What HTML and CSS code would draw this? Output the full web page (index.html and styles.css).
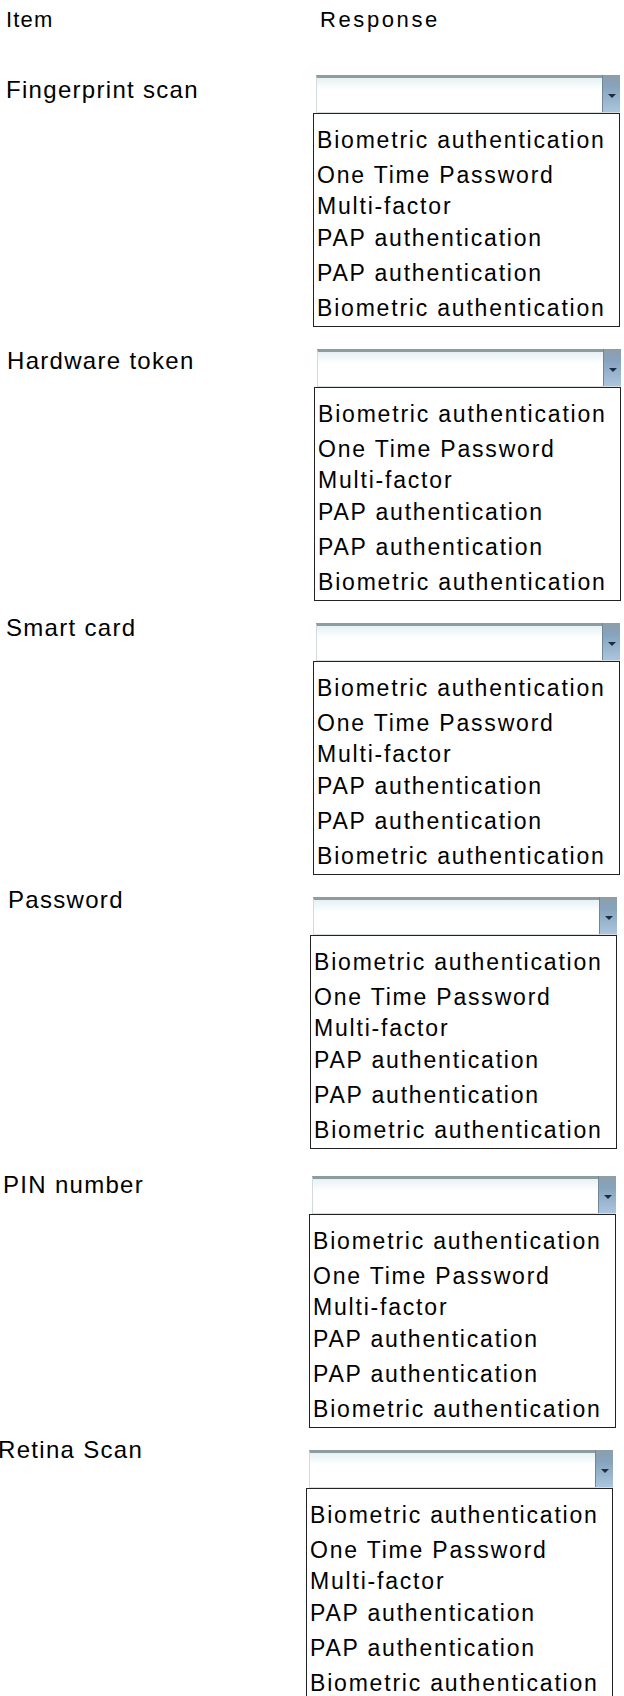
FILE: index.html
```html
<!DOCTYPE html>
<html>

<head>
    <meta charset="UTF-8">
    <meta name="viewport" content="width=device-width, initial-scale=1.0">
    <title>Authentication Methods</title>
    <link rel="stylesheet" href="styles.css">
</head>

<body>
    <div class="sheet">
        <div class="heading">
            <div class="heading-item">Item</div>
            <div class="heading-response">Response</div>
        </div>
        <div class="rows" id="rows"></div>
    </div>
    <script>
        // Items on the left and the answers listed under every dropdown
        const items = ["Fingerprint scan", "Hardware token", "Smart card", "Password", "PIN number", "Retina Scan"];
        const choices = [
            "Biometric authentication",
            "One Time Password",
            "Multi-factor",
            "PAP authentication",
            "PAP authentication",
            "Biometric authentication"
        ];

        const rows = document.getElementById("rows");

        // Build one row per item: label, closed select, open option list
        items.forEach((item) => {
            const row = document.createElement("div");
            row.className = "row";
            row.innerHTML = `
            <div class="row-label">${item}</div>
            <div class="response">
                <div class="select">
                    <span class="select-btn">
                        <svg width="8" height="4" viewBox="0 0 8 4"><path d="M0 0h8L4 4z" fill="#1b2d45"/></svg>
                    </span>
                </div>
                <ul class="options">
                    ${choices.map((choice) => `<li>${choice}</li>`).join("")}
                </ul>
            </div>
            `;
            rows.appendChild(row);
        });
    </script>
</body>

</html>
```

FILE: styles.css
```css
/* Reset styles */
* {
    margin: 0;
    padding: 0;
    box-sizing: border-box;
}

html,
body {
    overflow: hidden;
}

body {
    font-family: "Liberation Sans", Arial, sans-serif;
    color: #000;
    background-color: #fff;
}

/* Column titles */
.heading {
    display: flex;
    align-items: baseline;
    height: 32px;
    padding-top: 8px;
    line-height: 24px;
}

.heading-item {
    width: 320px;
    padding-left: 6px;
    font-size: 22px;
    letter-spacing: 1.2px;
}

.heading-response {
    font-size: 22px;
    letter-spacing: 2.6px;
}

/* Item rows */
.rows {
    padding-top: 43px;
}

.row {
    display: flex;
    align-items: flex-start;
    margin-bottom: 22px;
}

.row-label {
    flex: none;
    width: 313px;
    padding-left: 6px;
    margin-top: 2px;
    font-size: 24px;
    line-height: 26px;
    letter-spacing: 1.3px;
    white-space: nowrap;
}

.response {
    flex: none;
    width: 307px;
}

/* Closed dropdown */
.select {
    display: flex;
    justify-content: flex-end;
    height: 38px;
    margin-left: 3px;
    border-top: 3px solid #8d9c9e;
    border-left: 1px solid #d3dadb;
    border-bottom: 1px solid #d9dfe0;
    background: linear-gradient(#e6f1f4, #fff 35%);
}

.select-btn {
    display: flex;
    align-items: center;
    justify-content: center;
    width: 18px;
    margin-top: -3px;
    padding-top: 4px;
    border-left: 1px solid #6f8797;
    background: linear-gradient(#8e9ea8, #86a3bd 30%, #aac5dd);
}

/* Open option list */
.options {
    list-style: none;
    height: 214px;
    padding: 10px 0 0 3px;
    border: 1px solid #222;
    background-color: #fff;
    overflow: hidden;
}

.options li {
    font-size: 23px;
    line-height: 33.5px;
    letter-spacing: 1.8px;
    white-space: nowrap;
}

/* The options are not evenly spaced */
.options li:nth-child(2) {
    margin-top: 1px;
}

.options li:nth-child(3) {
    margin-top: -2.5px;
}

.options li:nth-child(4) {
    margin-top: -1px;
}

.options li:nth-child(5),
.options li:nth-child(6) {
    margin-top: 1.5px;
}

/* Rows are not all lined up the same way */
.row:nth-child(2) .row-label {
    padding-left: 7px;
    margin-top: -1px;
}

.row:nth-child(2) .response {
    margin-left: 1px;
}

.row:nth-child(3) .row-label {
    margin-top: -8px;
}

.row:nth-child(4) {
    margin-bottom: 27px;
}

.row:nth-child(4) .row-label {
    padding-left: 8px;
    margin-top: -10px;
}

.row:nth-child(4) .response {
    margin-left: -3px;
}

.row:nth-child(5) .row-label {
    padding-left: 3px;
    margin-top: -4px;
}

.row:nth-child(5) .response {
    margin-left: -4px;
}

.row:nth-child(6) .row-label {
    padding-left: 0;
    text-indent: -2px;
    margin-top: -13px;
}

.row:nth-child(6) .response {
    margin-left: -7px;
}
```
